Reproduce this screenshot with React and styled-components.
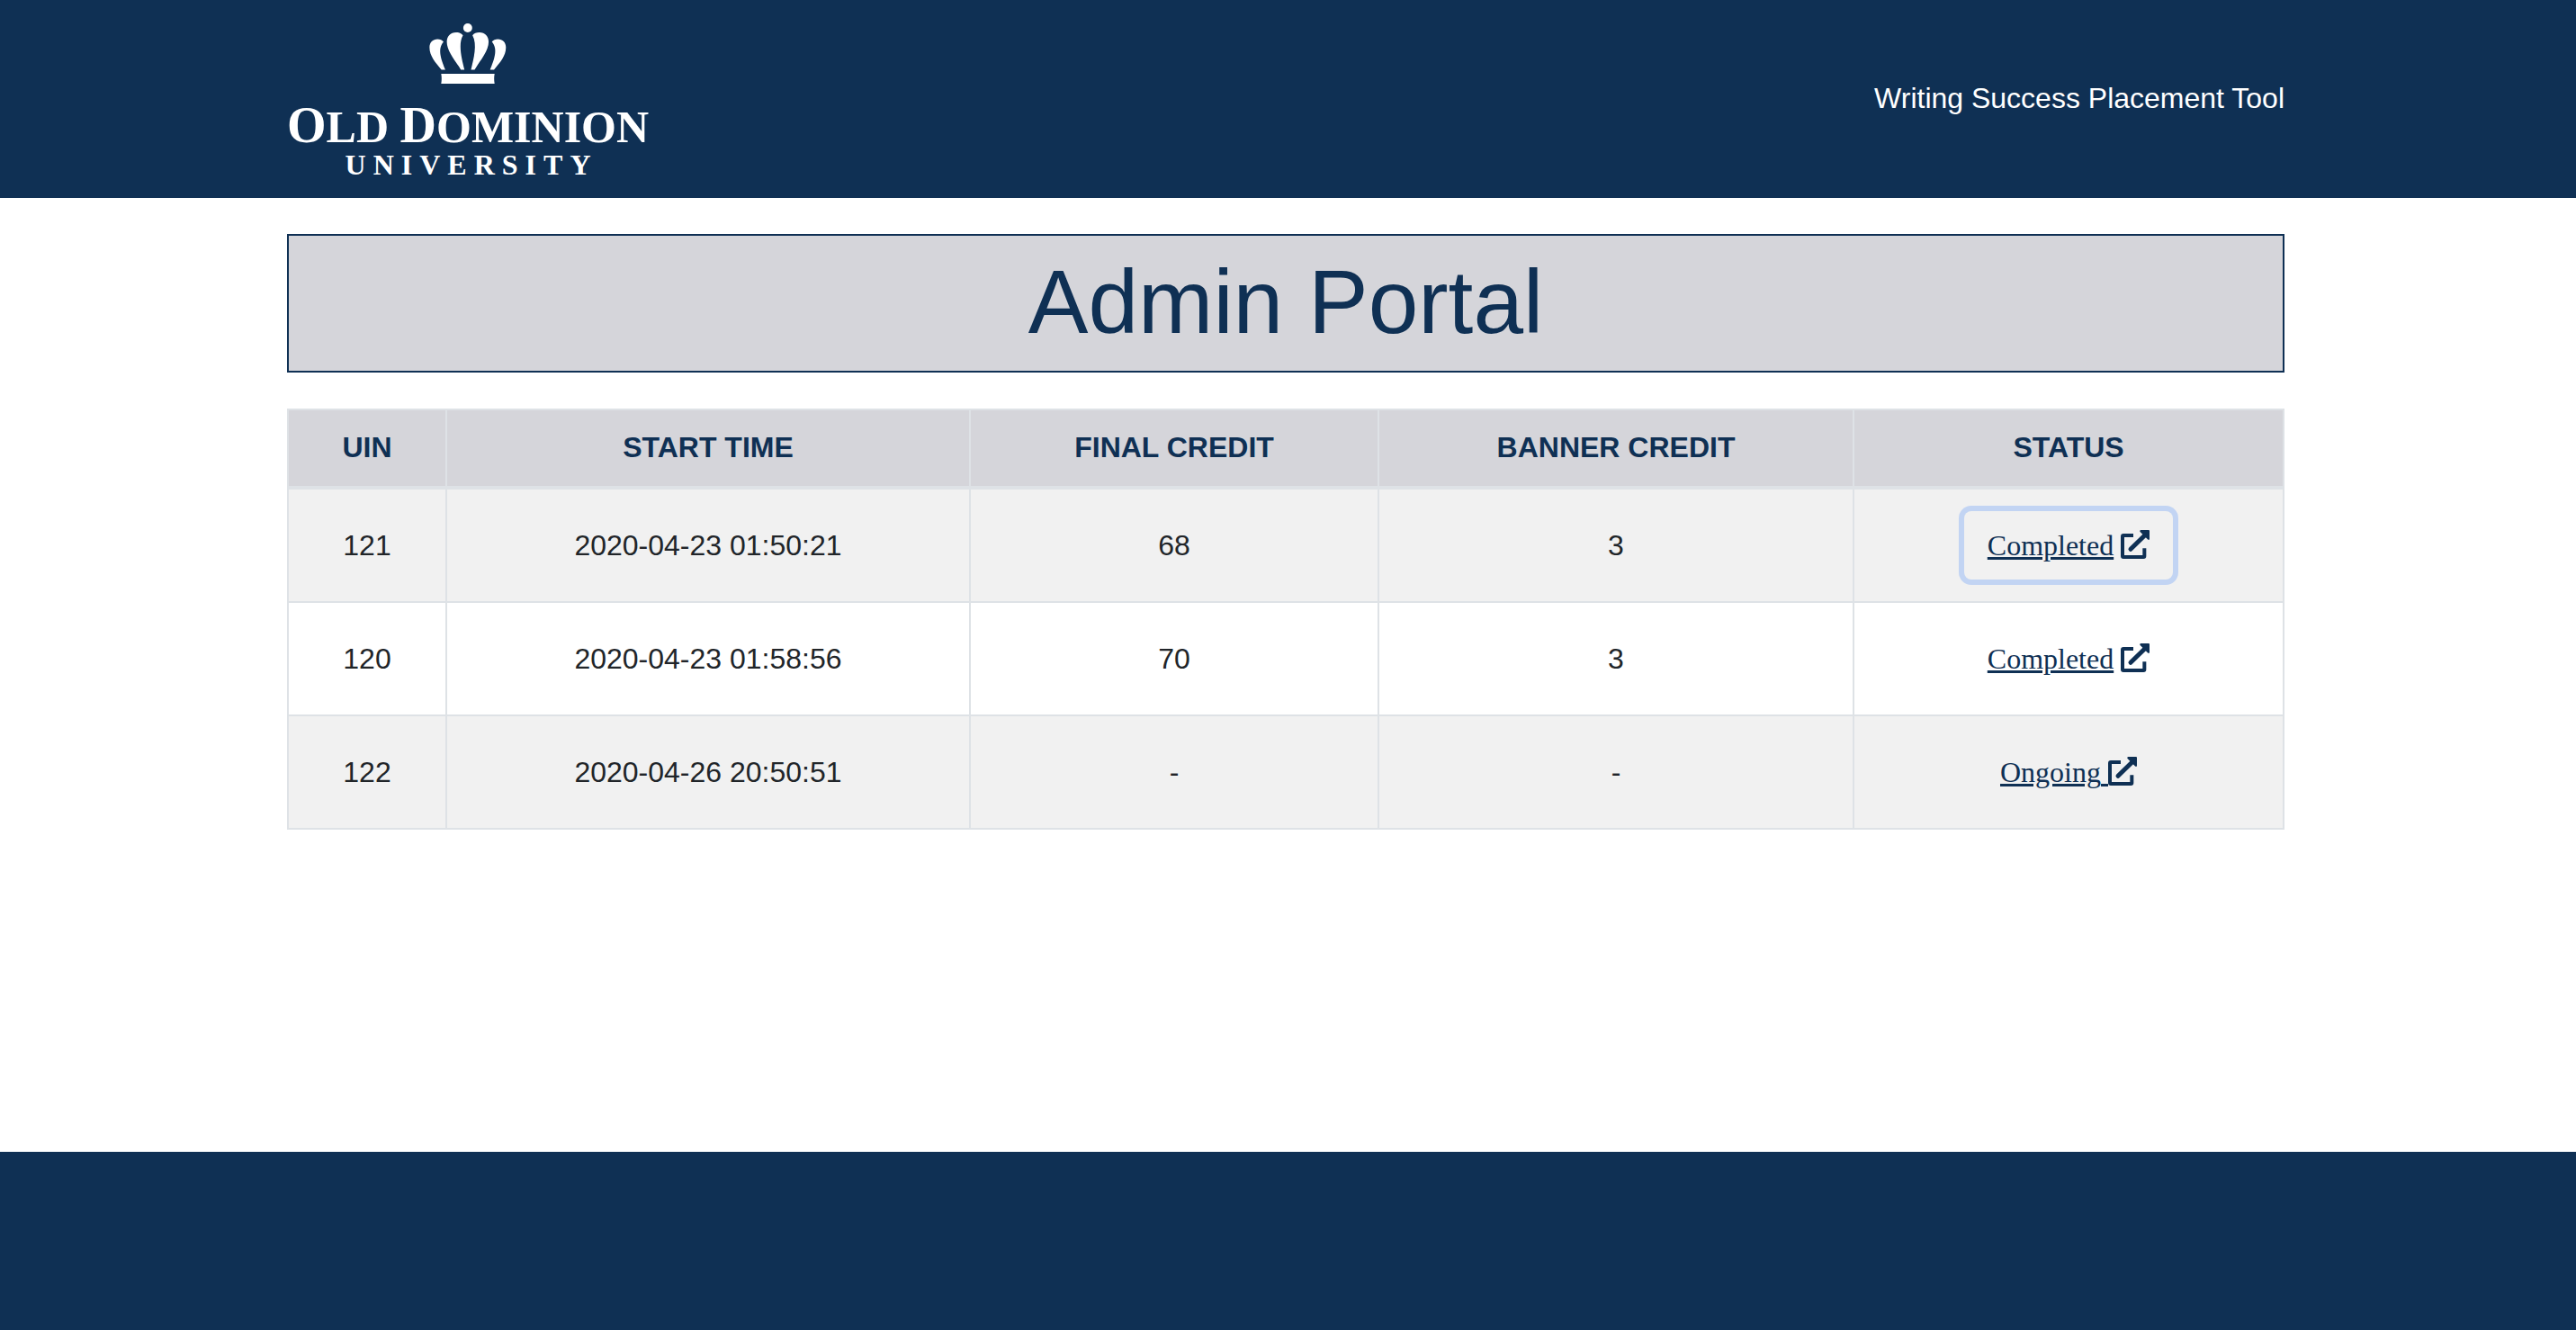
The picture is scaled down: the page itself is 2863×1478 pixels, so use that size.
import React from "react";
import styled, { createGlobalStyle } from "styled-components";

const navy = "#0f3054";
const silver = "#d5d5da";
const line = "#dee2e6";
const sans = `Helvetica, "Liberation Sans", Arial, sans-serif`;
const serif = `"Liberation Serif", "Times New Roman", serif`;

const GlobalStyle = createGlobalStyle`
  *, *::before, *::after { box-sizing: border-box; }
  body {
    margin: 0;
    background: #fff;
    color: #212529;
    font-family: ${sans};
    font-size: 32px;
    line-height: 48px;
  }
`;

const Page = styled.div`
  display: flex;
  flex-direction: column;
  min-height: 100vh;
`;

const Container = styled.div`
  width: 100%;
  max-width: 2225px;
  margin: 0 auto;
  padding-right: 5px;
`;

const Header = styled.header`
  background: ${navy};
  color: #fff;
`;

const HeaderBar = styled(Container)`
  display: flex;
  align-items: center;
  justify-content: space-between;
  height: 220px;
`;

const Brand = styled.a`
  display: flex;
  flex-direction: column;
  align-items: center;
  color: #fff;
  font-family: ${serif};
  font-weight: 700;
  text-decoration: none;
  white-space: nowrap;
`;

const Crown = styled.svg`
  display: block;
  width: 86px;
  height: 67px;
`;

const BrandName = styled.span`
  margin-top: 16px;
  font-size: 50px;
  line-height: 60px;
`;

const Initial = styled.span`
  font-size: 56px;
`;

const BrandSub = styled.span`
  padding-left: 8px;
  font-size: 32px;
  line-height: 24px;
  letter-spacing: 8px;
`;

const Tool = styled.span`
  padding-bottom: 2px;
  font-size: 32px;
`;

const Main = styled.main`
  flex: 1;
  padding: 40px 0;
`;

const Title = styled.h1`
  margin: 0 0 40px;
  padding: 13px 0 17px;
  border: 2px solid ${navy};
  background: ${silver};
  color: ${navy};
  font-size: 100px;
  font-weight: 400;
  line-height: 120px;
  text-align: center;
`;

const Table = styled.table`
  width: 100%;
  table-layout: fixed;
  border-collapse: collapse;
  text-align: center;
`;

const Col = styled.col`
  width: ${(p) => p.$width}px;
`;

const HeadCell = styled.th`
  height: 87px;
  padding: 17px 24px 19px;
  border: 2px solid ${line};
  border-bottom-width: 4px;
  background: ${silver};
  color: ${navy};
  font-weight: 700;
`;

const Row = styled.tr`
  &:nth-child(odd) { background: #f1f1f1; }
`;

const Cell = styled.td`
  padding: 24px;
  border: 2px solid ${line};
  vertical-align: middle;
`;

const StatusButton = styled.button`
  display: inline-block;
  padding: 12px 24px;
  border: 2px solid transparent;
  border-radius: 8px;
  background: transparent;
  box-shadow: ${(p) => (p.$active ? "0 0 0 6px #c2d4f3" : "none")};
  color: ${navy};
  font-family: ${serif};
  font-size: 32px;
  line-height: 48px;
  vertical-align: top;
  cursor: pointer;
`;

const LinkIcon = styled.svg`
  width: 32px;
  height: 32px;
  vertical-align: -4px;
`;

const Footer = styled.footer`
  height: 198px;
  background: ${navy};
`;

const columns = [
  ["UIN", 176],
  ["START TIME", 582],
  ["FINAL CREDIT", 454],
  ["BANNER CREDIT", 528],
  ["STATUS", 478],
];

const students = [
  { uin: "121", start: "2020-04-23 01:50:21", final: "68", banner: "3", status: "Completed", active: true },
  { uin: "120", start: "2020-04-23 01:58:56", final: "70", banner: "3", status: "Completed" },
  { uin: "122", start: "2020-04-26 20:50:51", final: "-", banner: "-", status: "Ongoing" },
];

function CrownMark() {
  const half = (
    <>
      <path d="M157 73C152 66 144 63 134 63C115 63 103 76 103 95C103 124 128 154 150 188H162C153 152 140 103 157 73Z" />
      <path d="M92 95C88 89 80 86 72 86C56 86 45 97 45 114C45 142 65 165 85 188H98C85 157 70 119 92 95Z" />
    </>
  );
  return (
    <Crown viewBox="45 33 257 202" fill="#fff" aria-hidden="true">
      <circle cx="173" cy="48" r="15" />
      {half}
      <g transform="translate(346 0) scale(-1 1)">{half}</g>
      <path d="M84 202H263Q260 218 263 235H84Q87 218 84 202Z" />
    </Crown>
  );
}

function ExternalLink() {
  return (
    <LinkIcon viewBox="0 0 96 96" fill="none" stroke="currentColor" aria-hidden="true">
      <path d="M42 18H9Q6 18 6 21V87Q6 90 9 90H76Q79 90 79 87V61" strokeWidth="12" strokeLinejoin="round" />
      <path d="M33 64L80 18" strokeWidth="15" strokeLinecap="round" />
      <path d="M67 0H93Q96 0 96 3V29Q96 34 91 32L64 5Q63 0 67 0Z" fill="currentColor" stroke="none" />
    </LinkIcon>
  );
}

function Status({ label, active }) {
  return (
    <StatusButton type="button" $active={active}>
      {label === "Ongoing" ? <u>{label} </u> : <><u>{label}</u> </>}
      <ExternalLink />
    </StatusButton>
  );
}

export default function App() {
  return (
    <Page>
      <GlobalStyle />
      <Header>
        <HeaderBar>
          <Brand href="#">
            <CrownMark />
            <BrandName>
              <Initial>O</Initial>LD <Initial>D</Initial>OMINION
            </BrandName>
            <BrandSub>UNIVERSITY</BrandSub>
          </Brand>
          <Tool>Writing Success Placement Tool</Tool>
        </HeaderBar>
      </Header>
      <Main>
        <Container>
          <Title>Admin Portal</Title>
          <Table>
            <colgroup>
              {columns.map(([name, width]) => <Col key={name} $width={width} />)}
            </colgroup>
            <thead>
              <tr>
                {columns.map(([name]) => <HeadCell key={name} scope="col">{name}</HeadCell>)}
              </tr>
            </thead>
            <tbody>
              {students.map((s) => (
                <Row key={s.uin}>
                  <Cell>{s.uin}</Cell>
                  <Cell>{s.start}</Cell>
                  <Cell>{s.final}</Cell>
                  <Cell>{s.banner}</Cell>
                  <Cell><Status label={s.status} active={s.active} /></Cell>
                </Row>
              ))}
            </tbody>
          </Table>
        </Container>
      </Main>
      <Footer />
    </Page>
  );
}
